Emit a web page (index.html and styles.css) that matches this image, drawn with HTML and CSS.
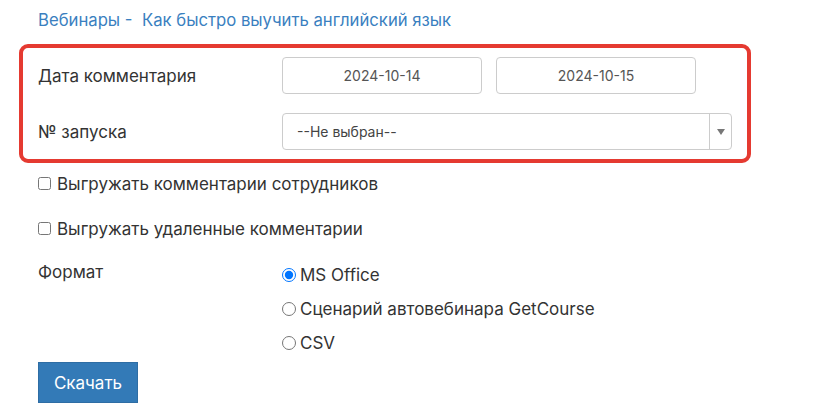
FILE: index.html
```html
<!DOCTYPE html>
<html lang="ru">
<head>
<meta charset="utf-8">
<title>Экспорт комментариев</title>
<link rel="stylesheet" href="styles.css">
</head>
<body>
<div class="page">
  <div class="crumbs"><a class="link" href="#">Вебинары</a><span class="sep"> -&nbsp;</span> <a class="link" href="#">Как быстро выучить английский язык</a></div>

  <div class="highlight">
    <div class="row">
      <div class="label">Дата комментария</div>
      <div class="dates">
        <div class="input">2024-10-14</div>
        <div class="input">2024-10-15</div>
      </div>
    </div>
    <div class="row">
      <div class="label">№ запуска</div>
      <div class="select">
        <span class="select-text">--Не выбран--</span>
        <span class="select-arrow"><span class="tri"></span></span>
      </div>
    </div>
  </div>

  <label class="check"><input type="checkbox"> Выгружать комментарии сотрудников</label>
  <label class="check"><input type="checkbox"> Выгружать удаленные комментарии</label>

  <div class="format">
    <div class="label">Формат</div>
    <div class="radios">
      <label class="radio"><input type="radio" name="f" checked> MS Office</label>
      <label class="radio"><input type="radio" name="f"> Сценарий автовебинара GetCourse</label>
      <label class="radio"><input type="radio" name="f"> CSV</label>
    </div>
  </div>

  <button class="btn">Скачать</button>
</div>
</body>
</html>
```

FILE: styles.css
```css
* { box-sizing: border-box; }
html, body { margin: 0; padding: 0; background: #fff; }
body {
  font-family: Inter, "Noto Sans", "DejaVu Sans", sans-serif;
  color: #333;
  font-size: 17px;
}
.page {
  padding: 10px 0 0 19px;
  width: 816px;
}
.crumbs {
  padding-left: 19px;
  font-size: 16.7px;
  line-height: 20px;
  color: #3a7fc0;
  height: 34px;
}
.link { color: #3a7fc0; text-decoration: none; }
.sep { color: #3a7fc0; }

.highlight {
  width: 732px;
  border: 4px solid #e53a31;
  border-radius: 9px;
  padding: 9px 15px 9px 15px;
  display: flex;
  flex-direction: column;
  gap: 19px;
}
.row {
  display: grid;
  grid-template-columns: 244px 1fr;
  align-items: center;
}
.label { font-size: 17px; line-height: 20px; }
.dates { display: flex; gap: 14px; }
.input {
  width: 200px;
  height: 37px;
  border: 1px solid #ccc;
  border-radius: 4px;
  text-align: center;
  font-size: 14px;
  line-height: 35px;
  color: #555;
}
.select {
  width: 450px;
  height: 37px;
  border: 1px solid #ccc;
  border-radius: 4px;
  display: flex;
  align-items: center;
  font-size: 14px;
  color: #444;
}
.select-text { flex: 1; padding-left: 14px; }
.select-arrow {
  width: 22px;
  height: 100%;
  border-left: 1px solid #ccc;
  display: flex;
  align-items: center;
  justify-content: center;
}
.tri {
  width: 0; height: 0;
  border-left: 4px solid transparent;
  border-right: 4px solid transparent;
  border-top: 6px solid #777;
}

.check {
  display: flex;
  align-items: center;
  padding-left: 19px;
  height: 45px;
  font-size: 17px;
  color: #333;
}
.check input {
  margin: 0 6px 0 0;
  width: 13px; height: 13px;
}
.highlight + .check { margin-top: -2px; }

.format {
  display: grid;
  grid-template-columns: 244px 1fr;
  padding-left: 19px;
  margin-top: 7px;
}
.format .label { padding-top: 4px; }
.radios { display: flex; flex-direction: column; }
.radio {
  display: flex;
  align-items: center;
  height: 34px;
  font-size: 17px;
  color: #333;
}
.radio input {
  margin: 0 4px 0 0;
  width: 14px; height: 14px;
}
.btn {
  margin: 2px 0 0 19px;
  width: 100px;
  height: 41px;
  background: #337ab7;
  border: 1px solid #2e6da4;
  color: #fff;
  font-family: inherit;
  font-size: 17px;
  border-radius: 0;
  padding: 0;
}
```
